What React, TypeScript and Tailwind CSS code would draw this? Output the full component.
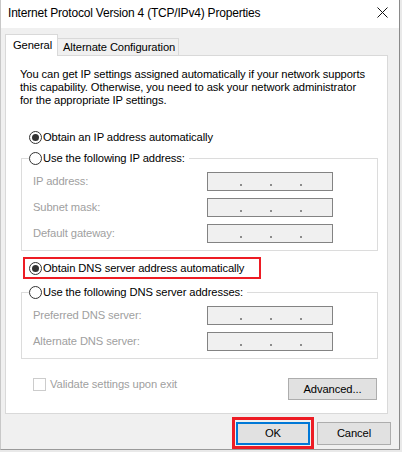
import React from "react";

function Radio({ checked }: { checked?: boolean }) {
  return (
    <span className="flex h-[13px] w-[13px] shrink-0 items-center justify-center rounded-full border border-[#333333] bg-white">
      {checked && <span className="h-[7px] w-[7px] rounded-full bg-[#333333]" />}
    </span>
  );
}

function IpBox() {
  return (
    <div className="flex h-[19px] w-[126px] items-end border border-[#838383] bg-[#f0f0f0] pb-[4px]">
      <span className="w-[32px]" />
      <span className="h-[2px] w-[2px] bg-[#8c8c8c]" />
      <span className="w-[28px]" />
      <span className="h-[2px] w-[2px] bg-[#8c8c8c]" />
      <span className="w-[28px]" />
      <span className="h-[2px] w-[2px] bg-[#8c8c8c]" />
    </div>
  );
}

function FieldRow({ label }: { label: string }) {
  return (
    <div className="flex h-[19px] items-center">
      <span className="w-[174px] text-[#a0a0a0]">{label}</span>
      <IpBox />
    </div>
  );
}

export default function App() {
  return (
    <div
      className="h-[452px] w-[402px] whitespace-nowrap bg-[#e9e9e9] text-[11.2px] leading-[13px] tracking-[-0.1px] text-black"
      style={{ fontFamily: '"Liberation Sans", Arial, sans-serif' }}
    >
      <div className="flex h-[450px] w-[400px] flex-col border-b border-l border-r border-b-[#9a9a9a] border-l-[#c8c8c8] border-r-[#8a8a8a] bg-[#f0f0f0]">
        {/* Title bar */}
        <div className="flex h-[28px] shrink-0 items-center justify-between bg-white pl-[7px] pr-[11px]">
          <span className="pb-[2px] text-[12px] tracking-[-0.2px]">Internet Protocol Version 4 (TCP/IPv4) Properties</span>
          <svg width="11" height="11" viewBox="0 0 11 11" className="mb-[4px]">
            <path d="M0.5 0.5L10.5 10.5M10.5 0.5L0.5 10.5" stroke="#111" strokeWidth="1" />
          </svg>
        </div>

        {/* Tabs */}
        <div className="ml-[4px] mt-[6px] flex h-[21px] items-end">
          <div className="relative z-10 -mb-px flex h-[22px] w-[53px] items-start border-l border-r border-t border-[#d9d9d9] bg-white pl-[7px] pt-[4px]">
            General
          </div>
          <div className="flex h-[17px] w-[121px] items-start border-r border-t border-[#d9d9d9] bg-[#f0f0f0] pl-[5px] pt-[2px]">
            Alternate Configuration
          </div>
        </div>

        {/* Panel */}
        <div className="ml-[4px] flex h-[359px] w-[383px] flex-col border border-[#d9d9d9] bg-white">
          <p className="ml-[14px] mt-[12px]">
            You can get IP settings assigned automatically if your network supports
            <br />
            this capability. Otherwise, you need to ask your network administrator
            <br />
            for the appropriate IP settings.
          </p>

          <div className="ml-[23px] mt-[24px] flex items-center gap-[1px]">
            <Radio checked />
            <span>Obtain an IP address automatically</span>
          </div>

          <fieldset className="ml-[15px] mt-[8px] w-[357px] border border-[#dcdcdc] pb-[7px]">
            <legend className="ml-[7px] flex items-center gap-[1px] pr-[4px]">
              <Radio />
              <span>Use the following IP address:</span>
            </legend>
            <div className="flex flex-col gap-[7px] pl-[11px] pt-[7px]">
              <FieldRow label="IP address:" />
              <FieldRow label="Subnet mask:" />
              <FieldRow label="Default gateway:" />
            </div>
          </fieldset>

          <div className="ml-[17px] mt-[6px] flex h-[22px] w-[238px] items-center gap-[1px] border-2 border-[#ed1c24] pl-[4px]">
            <Radio checked />
            <span>Obtain DNS server address automatically</span>
          </div>

          <fieldset className="ml-[15px] mt-[7px] w-[357px] border border-[#dcdcdc] pb-[7px]">
            <legend className="ml-[7px] flex items-center gap-[1px] pr-[4px]">
              <Radio />
              <span>Use the following DNS server addresses:</span>
            </legend>
            <div className="flex flex-col gap-[7px] pl-[11px] pt-[7px]">
              <FieldRow label="Preferred DNS server:" />
              <FieldRow label="Alternate DNS server:" />
            </div>
          </fieldset>

          <div className="ml-[27px] mr-[10px] mt-[19px] flex items-start justify-between">
            <div className="flex items-center gap-[4px]">
              <span className="h-[13px] w-[13px] border border-[#cccccc] bg-white" />
              <span className="text-[#a0a0a0]">Validate settings upon exit</span>
            </div>
            <button className="flex h-[22px] w-[89px] items-center justify-center border border-[#adadad] bg-[#e1e1e1]">
              Advanced...
            </button>
          </div>
        </div>

        {/* Buttons */}
        <div className="mt-[3px] flex items-center justify-end pr-[8px]">
          <div className="border-[3px] border-[#ed1c24] px-[1px] pb-[1px] pt-[2px]">
            <button className="flex h-[23px] w-[74px] items-center justify-center border-2 border-[#0078d7] bg-[#e1e1e1]">
              OK
            </button>
          </div>
          <button className="ml-[3px] flex h-[23px] w-[74px] items-center justify-center border border-[#adadad] bg-[#e1e1e1]">
            Cancel
          </button>
        </div>
      </div>
    </div>
  );
}
